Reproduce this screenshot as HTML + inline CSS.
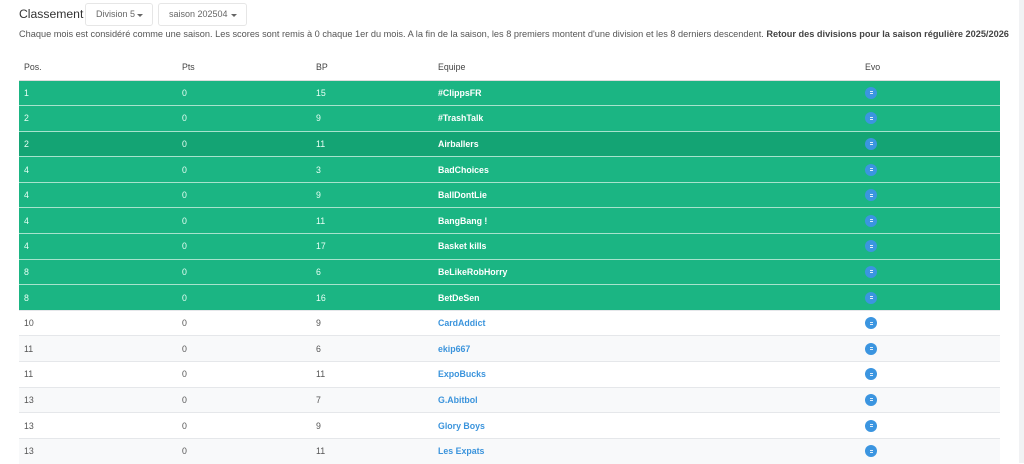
<!DOCTYPE html>
<html><head><meta charset="utf-8"><style>
*{box-sizing:border-box;margin:0;padding:0}
body{width:1024px;height:463px;overflow:hidden;background:#fff;font-family:"Liberation Sans",sans-serif;color:#555;position:relative}
.sb{position:absolute;right:0;top:0;width:5px;height:463px;background:#f1f2f4}
h1{position:absolute;left:19px;top:7px;font-size:12.2px;font-weight:normal;color:#333}
.dd{position:absolute;top:3px;height:23px;border:1px solid #e6e6e6;border-radius:3px;font-size:9px;color:#666;line-height:21px;padding-left:10px}
.dd:after{content:"";position:absolute;right:9px;top:10px;border-left:3px solid transparent;border-right:3px solid transparent;border-top:3px solid #666}
p{position:absolute;left:19px;top:29px;font-size:9.2px;color:#555;white-space:nowrap}
p b{color:#444}
table{position:absolute;left:19px;top:55px;width:981px;border-collapse:collapse;font-size:8.8px}
th{font-weight:normal;text-align:left;height:25px;color:#444;border-bottom:1px solid #ddd;padding-left:5px}
td{height:25.6px;border-top:1px solid #e5e7ea;padding-left:5px}
tr.g td{background:#1bb583;color:#e8fff5;border-top:1px solid #a7e3cd}
tr.g td.t{color:#fff;font-weight:bold}
tr.h td{background:#14a474}
tr.s td{background:#f8f9fa}
td.t{color:#3b94dc;font-weight:bold}
.c{display:inline-block;width:12px;height:12px;border-radius:50%;background:#3b95e0;vertical-align:middle;position:relative}
.c:before,.c:after{content:"";position:absolute;left:4.5px;width:3px;height:1px;background:#dfeefc}
.c:before{top:4.5px}.c:after{top:6.5px}
td:nth-child(1),th:nth-child(1){width:158px}
td:nth-child(2),th:nth-child(2){width:134px}
td:nth-child(3),th:nth-child(3){width:122px}
td:nth-child(4),th:nth-child(4){width:427px}
</style></head><body>
<div class="sb"></div>
<h1>Classement</h1>
<div class="dd" style="left:85px;width:68px">Division 5</div>
<div class="dd" style="left:158px;width:89px">saison 202504</div>
<p>Chaque mois est considéré comme une saison. Les scores sont remis à 0 chaque 1er du mois. A la fin de la saison, les 8 premiers montent d'une division et les 8 derniers descendent. <b>Retour des divisions pour la saison régulière 2025/2026</b></p>
<table>
<tr><th>Pos.</th><th>Pts</th><th>BP</th><th>Equipe</th><th>Evo</th></tr>
<tr class="g"><td>1</td><td>0</td><td>15</td><td class="t">#ClippsFR</td><td><span class="c"></span></td></tr>
<tr class="g"><td>2</td><td>0</td><td>9</td><td class="t">#TrashTalk</td><td><span class="c"></span></td></tr>
<tr class="g h"><td>2</td><td>0</td><td>11</td><td class="t">Airballers</td><td><span class="c"></span></td></tr>
<tr class="g"><td>4</td><td>0</td><td>3</td><td class="t">BadChoices</td><td><span class="c"></span></td></tr>
<tr class="g"><td>4</td><td>0</td><td>9</td><td class="t">BallDontLie</td><td><span class="c"></span></td></tr>
<tr class="g"><td>4</td><td>0</td><td>11</td><td class="t">BangBang !</td><td><span class="c"></span></td></tr>
<tr class="g"><td>4</td><td>0</td><td>17</td><td class="t">Basket kills</td><td><span class="c"></span></td></tr>
<tr class="g"><td>8</td><td>0</td><td>6</td><td class="t">BeLikeRobHorry</td><td><span class="c"></span></td></tr>
<tr class="g"><td>8</td><td>0</td><td>16</td><td class="t">BetDeSen</td><td><span class="c"></span></td></tr>
<tr><td>10</td><td>0</td><td>9</td><td class="t">CardAddict</td><td><span class="c"></span></td></tr>
<tr class="s"><td>11</td><td>0</td><td>6</td><td class="t">ekip667</td><td><span class="c"></span></td></tr>
<tr><td>11</td><td>0</td><td>11</td><td class="t">ExpoBucks</td><td><span class="c"></span></td></tr>
<tr class="s"><td>13</td><td>0</td><td>7</td><td class="t">G.Abitbol</td><td><span class="c"></span></td></tr>
<tr><td>13</td><td>0</td><td>9</td><td class="t">Glory Boys</td><td><span class="c"></span></td></tr>
<tr class="s"><td>13</td><td>0</td><td>11</td><td class="t">Les Expats</td><td><span class="c"></span></td></tr>
</table>
</body></html>
